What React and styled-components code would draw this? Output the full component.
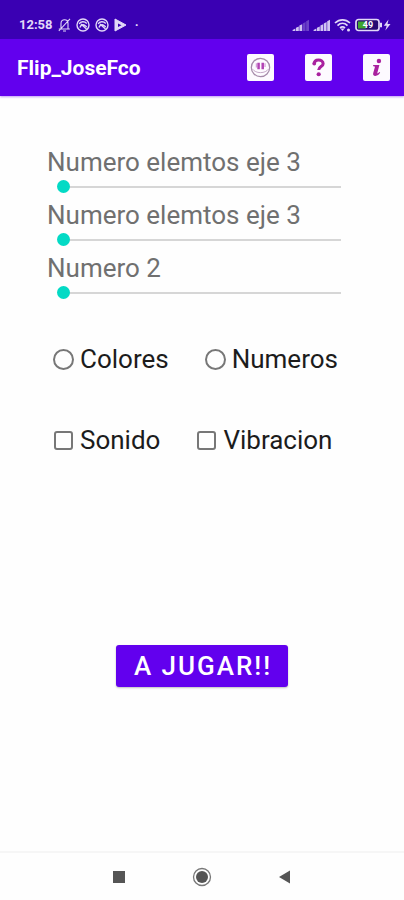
import React, { useState } from "react"
import styled, { createGlobalStyle, css } from "styled-components"

const GlobalStyle = createGlobalStyle`
	* { box-sizing: border-box; }

	body {
		margin: 0;
		background: #fefefe;
		font-family: Roboto, "Liberation Sans", sans-serif;
	}
`

const Screen = styled.div`
	min-height: 100vh;
	display: flex;
	flex-direction: column;
`

const StatusBar = styled.div`
	display: flex;
	align-items: center;
	justify-content: space-between;
	height: 39px;
	padding: 10px 13px 0 19px;
	background: #3a00b3;
	color: #e2d8f8;
`

const StatusGroup = styled.div`
	display: flex;
	align-items: center;
	gap: ${props => props.$gap}px;

	svg {
		display: block;
	}
`

const Clock = styled.span`
	font-size: 13px;
	line-height: 16px;
	font-weight: 700;
`

const Toolbar = styled.header`
	display: flex;
	align-items: center;
	justify-content: space-between;
	height: 57px;
	padding: 0 14px 0 17px;
	background: #6200ee;
	box-shadow: 0 1px 2px rgba(98, 0, 238, .4);
`

const Title = styled.h1`
	margin: 0;
	color: white;
	font-size: 21px;
	line-height: 24px;
	font-weight: 700;
`

const Actions = styled.div`
	display: flex;
	gap: 31px;
`

const IconButton = styled.button`
	width: 27px;
	height: 27px;
	padding: 0;
	border: 0;
	border-radius: 2px;
	background: #fdfaff;
	cursor: pointer;

	svg {
		display: block;
		width: 100%;
		height: 100%;
	}
`

const Settings = styled.main`
	flex: 1;
	display: flex;
	flex-direction: column;
	padding: 50px 47px 0;
`

const SliderLabel = styled.label`
	color: #707070;
	font-size: 26px;
	line-height: 32px;
`

const Slider = styled.input`
	appearance: none;
	height: 13px;
	margin: 2px 10px 6px;
	background: transparent;
	cursor: pointer;

	&::-webkit-slider-runnable-track {
		height: 13px;
		background: linear-gradient(#d6d6d6, #d6d6d6) center / calc(100% - 12px) 2px no-repeat;
	}

	&::-webkit-slider-thumb {
		appearance: none;
		width: 13px;
		height: 13px;
		border-radius: 50%;
		background: #03dac5;
	}
`

const Choices = styled.div`
	display: flex;
	gap: 36px;
	margin: ${props => props.$top}px 0 0 6px;
`

const Choice = styled.label`
	display: flex;
	align-items: center;
	gap: 6px;
	color: #1c1c1c;
	font-size: 26px;
	line-height: 32px;
	white-space: nowrap;
	cursor: pointer;
`

const Mark = styled.input`
	appearance: none;
	flex: none;
	width: 21px;
	height: 21px;
	margin: 0;
	border: 2px solid #777;
	border-radius: 50%;

	&:checked {
		border-color: #03dac5;
		background: #03dac5;
		box-shadow: inset 0 0 0 3px white;
	}

	${props => props.type === "checkbox" && css`
		width: 19px;
		height: 19px;
		margin: 0 1px;
		border-radius: 3px;
	`}
`

const PlayButton = styled.button`
	align-self: center;
	height: 42px;
	margin-top: 189px;
	padding: 0 16px 0 18px;
	border: 0;
	border-radius: 3px;
	background: #6200ee;
	box-shadow: 0 1px 2px rgba(0, 0, 0, .25);
	color: white;
	font-family: inherit;
	font-size: 26px;
	line-height: 32px;
	font-weight: 500;
	letter-spacing: 2px;
	cursor: pointer;
`

const NavBar = styled.nav`
	display: flex;
	align-items: center;
	justify-content: center;
	gap: 55px;
	height: 49px;
	border-top: 2px solid #f6f6f6;
`

const NavButton = styled.button`
	width: 28px;
	height: 28px;
	padding: 0;
	border: 0;
	background: transparent;
	cursor: pointer;

	svg {
		display: block;
	}
`

const MutedBell = () => (
	<svg width="13" height="14" viewBox="0 0 13 14" fill="none" stroke="currentColor" strokeWidth="1.1">
		<path d="M.8 11h11M3 10.500V5.500C3 3 4.500 1.800 6.500 1.800S10 3 10 5.500v5M5 13h3M.8 13L12 .8" />
	</svg>
)

const Chrome = () => (
	<svg width="14" height="14" viewBox="0 0 14 14" fill="none" stroke="currentColor" strokeWidth="1.400">
		<circle cx="7" cy="7" r="6" />
		<path d="M3.200 6C4.500 3.300 8.500 3 10.800 5.500M4 9.500c.5-2.500 3-3.500 5-2M5 6l5.500 5M9 7.500l1.800 1.500" />
	</svg>
)

const PlayStore = () => (
	<svg width="13" height="14" viewBox="0 0 13 14">
		<path d="M1 1l11 6-11 6z" fill="currentColor" stroke="currentColor" strokeLinejoin="round" />
		<path d="M4 5.500l3.500 1.700L4 9z" fill="#3a00b3" />
	</svg>
)

const Signal = ({ level }) => (
	<svg width="17" height="12" viewBox="0 0 17 12" fill="currentColor">
		{[0, 1, 2, 3, 4].map(i => (
			<path
				key={i}
				d={`M${i * 3.4 + .6} 12v-${i * 2.2 + 1}l2.800-1.400V12z`}
				opacity={i < level ? .9 : .3}
			/>
		))}
	</svg>
)

const Wifi = () => (
	<svg width="17" height="14" viewBox="0 0 17 14" fill="none" stroke="currentColor" strokeWidth="1.700">
		<path d="M1 5c4.500-4.300 10.500-4.300 15 0M3.500 7.600c3-3 7-3 10 0M6 10c1.700-1.500 3.300-1.500 5 0" />
		<path d="M6.500 10.500l2 2.500 2-2.500z" fill="currentColor" stroke="none" />
		<circle cx="14.500" cy="12" r="1.500" fill="currentColor" stroke="none" />
	</svg>
)

const Battery = () => (
	<svg width="36" height="14" viewBox="0 0 36 14">
		<rect x="1" y="1.500" width="23" height="11" rx="2.500" fill="#260a72" stroke="currentColor" strokeWidth="1.700" />
		<path d="M3 3.500h8v7H3z" fill="#3fa62f" />
		<path d="M25 4.800h2v4.400h-2z" fill="currentColor" />
		<text x="13" y="10.300" textAnchor="middle" fontSize="9" fontWeight="700" fill="white">49</text>
		<path d="M33.500 1.500L28.800 7.700h2.900L30.300 12.500 35.500 6h-3z" fill="currentColor" />
	</svg>
)

const FaceIcon = () => (
	<svg viewBox="0 0 28 28" fill="none">
		<circle cx="14" cy="14" r="9.500" stroke="#a58aa9" strokeWidth="1.300" />
		<path d="M5.500 15.500c2 2.500 4.800 3.800 8.500 3.800s6.500-1.300 8.500-3.800" stroke="#c3a6c6" />
		<path d="M12 9v6.800M16.300 9v6.800" stroke="#b243b4" strokeWidth="2.600" />
		<path d="M9.700 9.500v4.500M18.700 9.500v4" stroke="#d39ad5" strokeWidth="1.200" />
	</svg>
)

const HelpIcon = () => (
	<svg viewBox="0 0 28 28" fill="none">
		<path d="M9.500 10.500c0-3 2-4.300 4.500-4.300s4.800 1.400 4.800 3.800c0 3-4.600 3-4.600 6.500" stroke="#a9209f" strokeWidth="3.200" />
		<circle cx="9.600" cy="10" r="1.900" fill="#a9209f" />
		<circle cx="14.200" cy="21" r="2.200" fill="#a9209f" />
	</svg>
)

const InfoIcon = () => (
	<svg viewBox="0 0 28 28" fill="#a9209f">
		<circle cx="16.500" cy="7.300" r="2.300" />
		<path d="M10.500 11.500h6.500l-2.300 8.700c.8 0 1.600-.6 2.300-1.500l.8.600c-1.200 2.200-2.800 3.400-5 3.400-2 0-2.700-1.200-2.200-3l1.700-6c.2-.8-.4-1.100-1.800-1.100z" />
	</svg>
)

const SLIDERS = [
	{ id: "rows", text: "Numero elemtos eje", min: 3, max: 10 },
	{ id: "cols", text: "Numero elemtos eje", min: 3, max: 10 },
	{ id: "max", text: "Numero", min: 2, max: 9 }
]

export default function App () {
	const [values, setValues] = useState({ rows: 3, cols: 3, max: 2 })

	return <Screen>
		<GlobalStyle />
		<StatusBar>
			<StatusGroup $gap={5}>
				<Clock>12:58</Clock>
				<MutedBell />
				<Chrome />
				<Chrome />
				<PlayStore />
				<Clock>&nbsp;·</Clock>
			</StatusGroup>
			<StatusGroup $gap={4}>
				<Signal level={3} />
				<Signal level={5} />
				<Wifi />
				<Battery />
			</StatusGroup>
		</StatusBar>
		<Toolbar>
			<Title>Flip_JoseFco</Title>
			<Actions>
				<IconButton aria-label="Jugador"><FaceIcon /></IconButton>
				<IconButton aria-label="Ayuda"><HelpIcon /></IconButton>
				<IconButton aria-label="Info"><InfoIcon /></IconButton>
			</Actions>
		</Toolbar>
		<Settings>
			{SLIDERS.map(s => (
				<React.Fragment key={s.id}>
					<SliderLabel htmlFor={s.id}>{s.text} {values[s.id]}</SliderLabel>
					<Slider
						id={s.id}
						type="range"
						min={s.min}
						max={s.max}
						value={values[s.id]}
						onChange={e => setValues({ ...values, [s.id]: Number(e.target.value) })}
					/>
				</React.Fragment>
			))}
			<Choices $top={38}>
				<Choice><Mark type="radio" name="mode" />Colores</Choice>
				<Choice><Mark type="radio" name="mode" />Numeros</Choice>
			</Choices>
			<Choices $top={49}>
				<Choice><Mark type="checkbox" />Sonido</Choice>
				<Choice><Mark type="checkbox" />Vibracion</Choice>
			</Choices>
			<PlayButton>A JUGAR!!</PlayButton>
		</Settings>
		<NavBar>
			<NavButton aria-label="Recientes">
				<svg width="28" height="28" viewBox="0 0 28 28"><path d="M8 8h12v12H8z" fill="#555" /></svg>
			</NavButton>
			<NavButton aria-label="Inicio">
				<svg width="28" height="28" viewBox="0 0 28 28">
					<circle cx="14" cy="14" r="8.500" fill="none" stroke="#777" strokeWidth="1.300" />
					<circle cx="14" cy="14" r="6" fill="#555" />
				</svg>
			</NavButton>
			<NavButton aria-label="Atras">
				<svg width="28" height="28" viewBox="0 0 28 28"><path d="M19 7.500v13L8 14z" fill="#555" /></svg>
			</NavButton>
		</NavBar>
	</Screen>
}
